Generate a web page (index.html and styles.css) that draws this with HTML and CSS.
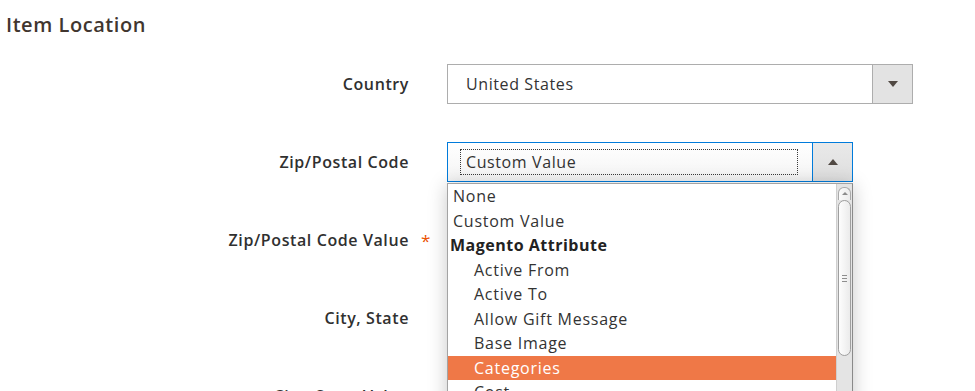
FILE: index.html
```html
<!DOCTYPE html>
<html lang="en">
<head>
    <meta charset="UTF-8">
    <meta name="viewport" content="width=device-width, initial-scale=1.0">
    <title>Item Location</title>
    <link rel="stylesheet" href="styles.css">
</head>
<body>
    <h2 class="section-title">Item Location</h2>

    <div class="form">
        <div class="row">
            <label class="label">Country</label>
            <span class="required"></span>
            <div class="select">
                <div class="select-value">United States</div>
                <div class="select-button"><span class="arrow-down"></span></div>
            </div>
        </div>

        <div class="row">
            <label class="label">Zip/Postal Code</label>
            <span class="required"></span>
            <div class="select-wrap">
                <div class="select select-open">
                    <div class="select-value"><span class="focus-ring">Custom Value</span></div>
                    <div class="select-button"><span class="arrow-up"></span></div>
                </div>

                <!-- open dropdown list -->
                <div class="dropdown">
                    <ul class="options">
                        <li>None</li>
                        <li>Custom Value</li>
                        <li class="group">Magento Attribute</li>
                        <li class="child">Active From</li>
                        <li class="child">Active To</li>
                        <li class="child">Allow Gift Message</li>
                        <li class="child">Base Image</li>
                        <li class="child selected">Categories</li>
                        <li class="child">Cost</li>
                        <li class="child">Country of Manufacture</li>
                    </ul>
                    <div class="scrollbar">
                        <div class="scroll-up"><span></span></div>
                        <div class="scroll-thumb"><span class="grip"></span></div>
                    </div>
                </div>
            </div>
        </div>

        <div class="row">
            <label class="label">Zip/Postal Code Value</label>
            <span class="required">*</span>
            <div></div>
        </div>

        <div class="row">
            <label class="label">City, State</label>
            <span class="required"></span>
            <div></div>
        </div>

        <div class="row">
            <label class="label">City, State Value</label>
            <span class="required"></span>
            <div></div>
        </div>
    </div>
</body>
</html>
```

FILE: styles.css
```css
body {
    margin: 0;
    background-color: #ffffff;
    font-family: "Open Sans", "DejaVu Sans", sans-serif;
    color: #303030;
    overflow: hidden;
}
.section-title {
    margin: 0;
    padding: 12px 6px 0;
    font-size: 20px;
    font-weight: 600;
    line-height: 26px;
    letter-spacing: 0.55px;
    color: #41362f;
}
.form {
    margin-top: 26px;
}
.row {
    display: grid;
    grid-template-columns: 410px 37px 466px;
    align-items: center;
    height: 40px;
    margin-bottom: 38px;
}
.label {
    text-align: right;
    padding-right: 1px;
    font-size: 16px;
    font-weight: 600;
    letter-spacing: 0.6px;
    color: #303030;
}
.required {
    padding-left: 11px;
    font-size: 17px;
    color: #eb5202;
    line-height: 1;
}
.select {
    display: flex;
    height: 40px;
    box-sizing: border-box;
    border: 1px solid #adadad;
    background-color: #ffffff;
}
.select-value {
    flex: 1;
    display: flex;
    align-items: center;
    padding-left: 18px;
    font-size: 16px;
    letter-spacing: 0.6px;
    color: #333333;
}
.select-button {
    width: 39px;
    border-left: 1px solid #adadad;
    background-color: #e3e3e3;
    display: flex;
    align-items: center;
    justify-content: center;
}
.arrow-down {
    width: 0;
    height: 0;
    border-left: 5px solid transparent;
    border-right: 5px solid transparent;
    border-top: 6px solid #514943;
}
.arrow-up {
    width: 0;
    height: 0;
    border-left: 5px solid transparent;
    border-right: 5px solid transparent;
    border-bottom: 6px solid #514943;
}
.select-wrap {
    position: relative;
    width: 406px;
    z-index: 10;
}
.select-open {
    border-color: #007bdb;
}
.select-open .select-value {
    padding: 6px 14px 6px 12px;
    background: linear-gradient(#ffffff, #f4f4f4);
}
.select-open .select-button {
    border-left-color: #007bdb;
    background: linear-gradient(#e9e9e9, #dedede);
}
.focus-ring {
    flex: 1;
    align-self: stretch;
    display: flex;
    align-items: center;
    padding-left: 5px;
    border: 1px dotted #3a3a3a;
}
.dropdown {
    position: absolute;
    top: 41px;
    left: 0;
    width: 406px;
    height: 240px;
    box-sizing: border-box;
    display: flex;
    border: 1px solid #a3a3a3;
    border-right-color: #8a8a8a;
    background-color: #ffffff;
    box-shadow: 0 2px 18px rgba(0, 0, 0, 0.22);
}
.options {
    flex: 1;
    margin: 0;
    padding: 0;
    list-style: none;
    font-size: 16px;
    line-height: 24.5px;
    letter-spacing: 0.75px;
    color: #333333;
}
.options li {
    padding-left: 5px;
    white-space: nowrap;
}
.options .group {
    font-weight: 700;
    padding-left: 2px;
    letter-spacing: 0.5px;
    color: #222222;
}
.options .child {
    padding-left: 26px;
}
.options .selected {
    background-color: #ef7847;
    color: #ffffff;
}
.scrollbar {
    width: 15px;
    border-left: 1px solid #cfcfcf;
    background-color: #e4e4e4;
    display: flex;
    flex-direction: column;
    align-items: center;
    padding-top: 3px;
}
.scroll-up {
    width: 13px;
    height: 13px;
    box-sizing: border-box;
    border: 1px solid #a9a9a9;
    border-bottom: none;
    border-radius: 6px 6px 0 0;
    background: linear-gradient(to right, #fbfbfb, #ececec);
    display: flex;
    justify-content: center;
    padding-top: 4px;
}
.scroll-up span {
    width: 0;
    height: 0;
    border-left: 3px solid transparent;
    border-right: 3px solid transparent;
    border-bottom: 3px solid #8c8c8c;
}
.scroll-thumb {
    width: 13px;
    height: 156px;
    box-sizing: border-box;
    border: 1px solid #9f9f9f;
    border-radius: 7px;
    background: linear-gradient(to right, #fdfdfd, #ebebeb);
    display: flex;
    align-items: center;
    justify-content: center;
}
.grip {
    width: 5px;
    height: 5px;
    border-top: 1px solid #8e8e8e;
    border-bottom: 1px solid #8e8e8e;
    background: linear-gradient(transparent 2px, #8e8e8e 2px, #8e8e8e 3px, transparent 3px);
}
```
